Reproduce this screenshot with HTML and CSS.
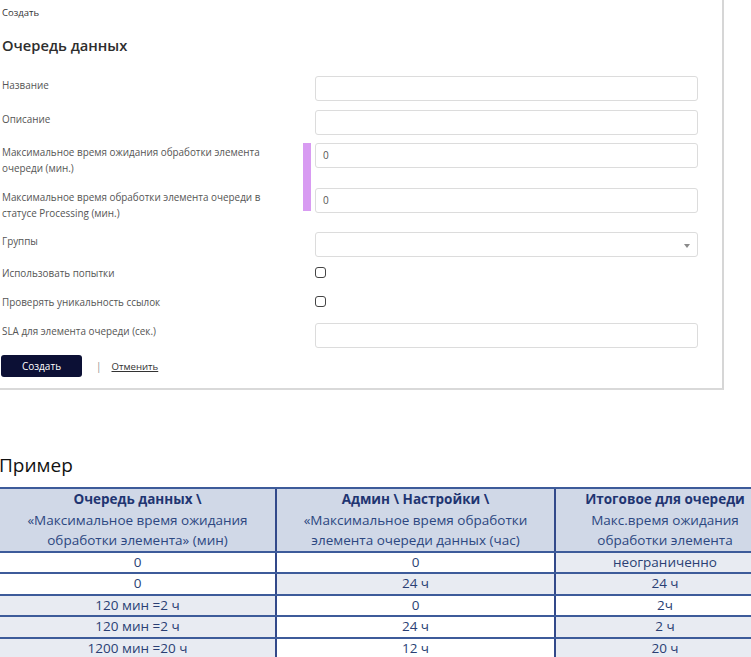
FILE: index.html
```html
<!DOCTYPE html>
<html lang="ru">
<head>
<meta charset="utf-8">
<title>Очередь данных</title>
<link rel="stylesheet" href="styles.css">
</head>
<body>
<div class="page">
  <section class="card">
    <div class="crumb">Создать</div>
    <h1 class="title">Очередь данных</h1>
    <div class="fields">
      <div class="row r1">
        <label class="lbl">Название</label>
        <div class="ctl"><div class="input"></div></div>
      </div>
      <div class="row r2">
        <label class="lbl">Описание</label>
        <div class="ctl"><div class="input"></div></div>
      </div>
      <div class="group">
        <div class="row r3">
          <label class="lbl">Максимальное время ожидания обработки элемента<br>очереди (мин.)</label>
          <div class="ctl"><div class="input">0</div></div>
        </div>
        <div class="row r4">
          <label class="lbl">Максимальное время обработки элемента очереди в<br>статусе Processing (мин.)</label>
          <div class="ctl"><div class="input">0</div></div>
        </div>
      </div>
      <div class="row r5">
        <label class="lbl">Группы</label>
        <div class="ctl"><div class="input select"><span class="caret"></span></div></div>
      </div>
      <div class="row r6">
        <label class="lbl">Использовать попытки</label>
        <div class="ctl"><span class="check"></span></div>
      </div>
      <div class="row r7">
        <label class="lbl">Проверять уникальность ссылок</label>
        <div class="ctl"><span class="check"></span></div>
      </div>
      <div class="row r8">
        <label class="lbl">SLA для элемента очереди (сек.)</label>
        <div class="ctl"><div class="input"></div></div>
      </div>
      <div class="actions">
        <button class="btn">Создать</button>
        <span class="sep">|</span>
        <a class="cancel">Отменить</a>
      </div>
    </div>
  </section>

  <h2 class="example">Пример</h2>

  <table class="tbl">
    <thead>
      <tr>
        <th><b>Очередь данных \</b><br>«Максимальное время ожидания<br>обработки элемента» (мин)</th>
        <th><b>Админ \ Настройки \</b><br>«Максимальное время обработки<br>элемента очереди данных (час)</th>
        <th><b>Итоговое для очереди</b><br>Макс.время ожидания<br>обработки элемента</th>
      </tr>
    </thead>
    <tbody>
      <tr><td>0</td><td>0</td><td class="g">неограниченно</td></tr>
      <tr><td>0</td><td class="g">24 ч</td><td class="g">24 ч</td></tr>
      <tr><td class="g">120 мин =2 ч</td><td>0</td><td>2ч</td></tr>
      <tr><td class="g">120 мин =2 ч</td><td>24 ч</td><td class="g">2 ч</td></tr>
      <tr><td class="g">1200 мин =20 ч</td><td>12 ч</td><td class="g">20 ч</td></tr>
    </tbody>
  </table>
</div>
</body>
</html>
```

FILE: styles.css
```css
html, body {
  margin: 0;
  padding: 0;
  background: #ffffff;
}
body {
  width: 751px;
  height: 657px;
  overflow: hidden;
  font-family: "Open Sans", "Noto Sans", sans-serif;
}
.page {
  width: 751px;
}
.card {
  width: 720px;
  padding: 5px 0 11px 2px;
  border-right: 2px solid #d6d6d6;
  border-bottom: 2px solid #d9d9d9;
  background: #fff;
}
.crumb {
  font-size: 9.5px;
  line-height: 16px;
  color: #333;
}
.title {
  margin: 14px 0 0 0;
  font-size: 14.7px;
  line-height: 20px;
  font-weight: 600;
  color: #2e2e2e;
}
.fields {
  margin-top: 21px;
  display: flex;
  flex-direction: column;
}
.row {
  display: flex;
  align-items: flex-start;
}
.lbl {
  width: 313px;
  padding-top: 1px;
  font-size: 9.9px;
  line-height: 16px;
  color: #555;
}
.ctl {
  width: 383px;
}
.input {
  box-sizing: border-box;
  height: 25px;
  border: 1px solid #dcdcdc;
  border-radius: 3px;
  background: #fff;
  padding: 0 7px;
  font-size: 10px;
  line-height: 23px;
  color: #555;
  position: relative;
}
.select .caret {
  position: absolute;
  right: 7px;
  top: 11px;
  width: 0;
  height: 0;
  border-left: 3px solid transparent;
  border-right: 3px solid transparent;
  border-top: 4px solid #8a8a8a;
}
.r2 { margin-top: 9px; }
.group {
  margin-top: 8px;
  position: relative;
}
.group::before {
  content: "";
  position: absolute;
  left: 301px;
  top: 0;
  width: 8px;
  height: 68px;
  background: #d89bf2;
}
.r4 { margin-top: 12px; }
.r5 { margin-top: 11px; }
.r6 { margin-top: 7px; }
.r7 { margin-top: 12px; }
.r8 { margin-top: 13px; }
.check {
  display: block;
  box-sizing: border-box;
  width: 11px;
  height: 11px;
  margin-top: 3px;
  border: 1.5px solid #444;
  border-radius: 3px;
  background: #fff;
}
.r8 .lbl { padding-top: 0; }
.actions {
  margin-top: 7px;
  display: flex;
  align-items: center;
  height: 22px;
  margin-left: -1px;
}
.btn {
  width: 81px;
  height: 22px;
  border: none;
  border-radius: 3px;
  background: #0c1035;
  color: #fff;
  font-family: "Open Sans", sans-serif;
  font-size: 10px;
  padding: 0;
}
.sep {
  margin-left: 14px;
  font-size: 10px;
  color: #8c8c8c;
}
.cancel {
  margin-left: 10px;
  font-size: 9.6px;
  color: #333;
  text-decoration: underline;
}
.example {
  margin: 63px 0 0 -1px;
  font-size: 19px;
  line-height: 24px;
  font-weight: 400;
  color: #111;
  height: 34px;
}
.tbl {
  width: 774px;
  border-collapse: collapse;
  table-layout: fixed;
  font-family: "Open Sans", sans-serif;
  color: #2a3f74;
}
.tbl th:nth-child(1), .tbl td:nth-child(1) { width: 275px; }
.tbl th:nth-child(2), .tbl td:nth-child(2) { width: 277px; }
.tbl th {
  background: #d0d8e7;
  font-size: 13.5px;
  line-height: 20.5px;
  font-weight: 400;
  padding: 0;
  height: 60px;
  text-align: center;
  color: #2c4781;
  border-top: 2px solid #3d5b9a;
  border-bottom: 2px solid #3d5b9a;
}
.tbl th b {
  font-weight: 700;
  color: #1f3572;
}
.tbl th + th, .tbl td + td {
  border-left: 2px solid #32498a;
}
.tbl td {
  height: 19.5px;
  padding: 0;
  font-size: 13.5px;
  line-height: 19px;
  text-align: center;
  background: #fff;
  border-bottom: 2px solid #3d5b9a;
}
.tbl td.g {
  background: #e8ebf2;
}
```
